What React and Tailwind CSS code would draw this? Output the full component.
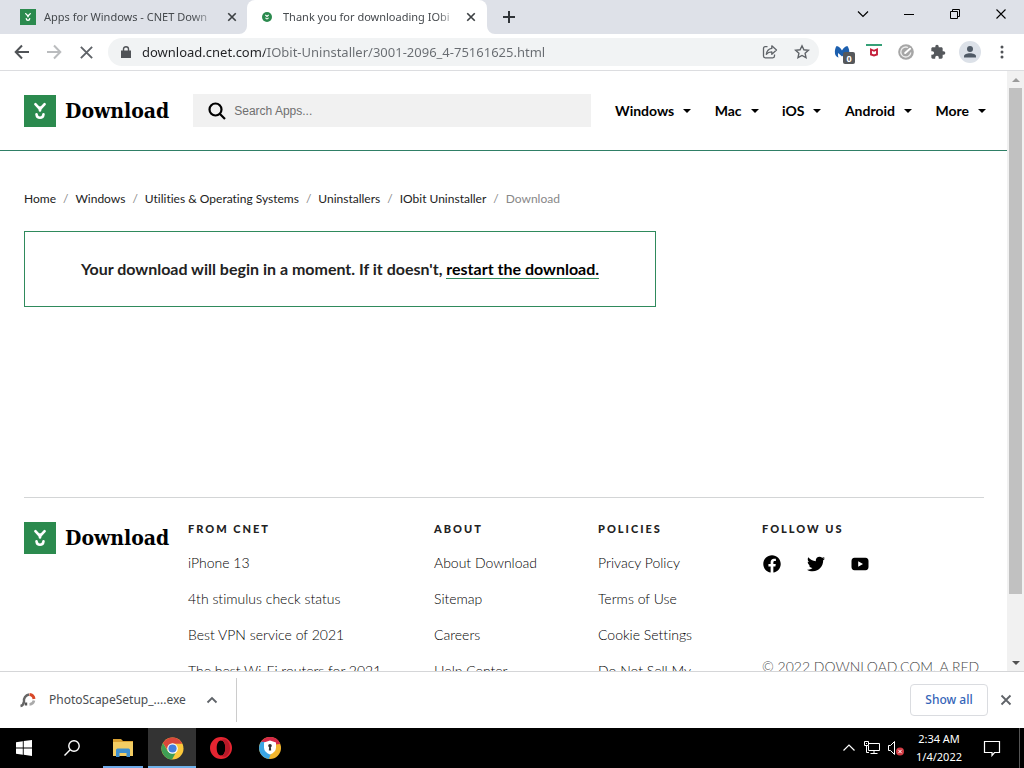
import React from "react";
import { FaFacebook, FaTwitter } from "react-icons/fa";

const ui = "font-['Noto_Sans','Open_Sans',sans-serif]";

function DownloadMark({ className }) {
  return (
    <svg viewBox="0 0 32 32" className={className} aria-hidden="true">
      <rect width="32" height="32" fill="#2b8a4e" />
      <path d="M11.400 9.200l4.600 5 4.600-5" fill="none" stroke="#fff" strokeWidth="2.600" strokeLinecap="round" strokeLinejoin="round" />
      <path d="M16 12.500v3" stroke="#fff" strokeWidth="2.600" strokeLinecap="round" />
      <path d="M12.500 19.300c.6 4.600 6.400 4.600 7 0" fill="none" stroke="#fff" strokeWidth="2.600" strokeLinecap="round" />
    </svg>
  );
}

function Logo() {
  return (
    <a href="#home" className="flex h-8 shrink-0 items-center gap-[9px] text-black">
      <DownloadMark className="size-8 shrink-0" />
      <span className="font-['DejaVu_Serif_Condensed','DejaVu_Serif',serif] text-[21px] leading-8 font-bold font-stretch-condensed">Download</span>
    </a>
  );
}

function Cross({ className, width = 2 }) {
  return (
    <svg viewBox="0 0 12 12" className={className} fill="none" stroke="currentColor" strokeWidth={width} aria-hidden="true">
      <path d="M1.5 1.5l9 9M10.5 1.5l-9 9" />
    </svg>
  );
}

function TabStrip() {
  return (
    <div className="flex h-[34px] shrink-0 bg-[#dee1e8] text-[11px] text-[#45494d]">
      <div className="flex w-[247px] items-center pl-5">
        <DownloadMark className="size-4 shrink-0" />
        <span className="ml-2 w-[174px] overflow-hidden whitespace-nowrap [mask-image:linear-gradient(90deg,#000_85%,transparent)]">
          Apps for Windows - CNET Down
        </span>
        <button aria-label="Close tab" className="ml-[6px] grid size-4 place-items-center text-[#3c4043]">
          <Cross className="size-[10px]" />
        </button>
      </div>
      <div className="relative flex w-[240px] items-center rounded-t-lg bg-white pl-[15px]">
        <svg viewBox="0 0 8 8" className="absolute bottom-0 -left-2 size-2" aria-hidden="true">
          <path d="M8 0v8H0a8 8 0 0 0 8-8z" fill="#fff" />
        </svg>
        <svg viewBox="0 0 8 8" className="absolute -right-2 bottom-0 size-2" aria-hidden="true">
          <path d="M0 0v8h8a8 8 0 0 1-8-8z" fill="#fff" />
        </svg>
        <svg viewBox="0 0 10 10" className="size-[10px] shrink-0" aria-hidden="true">
          <circle cx="5" cy="5" r="5" fill="#2b8a4e" />
          <path d="M3.300 2.800L5 4.500l1.700-1.700M3.500 5.800q1.500 2.200 3 0" fill="none" stroke="#fff" strokeWidth="1.100" />
        </svg>
        <span className="ml-[11px] w-[175px] overflow-hidden whitespace-nowrap [mask-image:linear-gradient(90deg,#000_88%,transparent)]">
          Thank you for downloading IObi
        </span>
        <button aria-label="Close tab" className="ml-[5px] grid size-4 place-items-center text-[#3c4043]">
          <Cross className="size-[10px]" />
        </button>
      </div>
      <button aria-label="New tab" className="ml-[14px] grid w-4 place-items-center">
        <svg viewBox="0 0 12 12" className="size-3" stroke="#303438" strokeWidth="2" aria-hidden="true">
          <path d="M6 0v12M0 6h12" />
        </svg>
      </button>
      <div className="ml-auto flex h-7 text-black">
        <button aria-label="Search tabs" className="grid w-[46px] place-items-center">
          <svg viewBox="0 0 12 8" className="h-2 w-3" fill="none" stroke="currentColor" strokeWidth="1.200" aria-hidden="true"><path d="M1 1.500l5 5 5-5" /></svg>
        </button>
        <button aria-label="Minimize" className="grid w-[46px] place-items-center">
          <svg viewBox="0 0 10 10" className="size-[10px]" stroke="currentColor" aria-hidden="true"><path d="M0 5.500h10" /></svg>
        </button>
        <button aria-label="Restore" className="grid w-[46px] place-items-center">
          <svg viewBox="0 0 10 10" className="size-[10px]" fill="none" stroke="currentColor" aria-hidden="true"><path d="M.5 2.500h7v7h-7zM2.500 2.500v-2h7v7h-2" /></svg>
        </button>
        <button aria-label="Close" className="grid w-[46px] place-items-center">
          <Cross className="size-3" width={1.1} />
        </button>
      </div>
    </div>
  );
}

function Toolbar() {
  return (
    <div className="flex h-[37px] shrink-0 items-center border-b border-[#dcdde0] bg-white pr-[14px] pl-3 text-[#5f6368]">
      <button aria-label="Back" className="grid w-5 place-items-center text-[#505357]">
        <svg viewBox="0 0 16 16" className="size-4" fill="none" stroke="currentColor" strokeWidth="2" aria-hidden="true"><path d="M15 8H2M8 1.500L1.700 8 8 14.500" /></svg>
      </button>
      <button aria-label="Forward" className="ml-3 grid w-5 place-items-center text-[#babcbe]">
        <svg viewBox="0 0 16 16" className="size-4" fill="none" stroke="currentColor" strokeWidth="2" aria-hidden="true"><path d="M1 8h13M8 1.500L14.300 8 8 14.500" /></svg>
      </button>
      <button aria-label="Stop loading" className="ml-3 grid w-5 place-items-center">
        <Cross className="size-[15px]" width={1.5} />
      </button>
      <div className="ml-3 flex h-7 flex-1 items-center rounded-full bg-[#f1f3f4] pr-[9px] pl-[13px]">
        <svg viewBox="0 0 10 12" className="h-3 w-[10px] shrink-0" aria-hidden="true">
          <path d="M0 4.500h10V12H0z" fill="#505357" />
          <path d="M2.500 5V3a2.500 2.300 0 0 1 5 0v2" fill="none" stroke="#505357" strokeWidth="1.400" />
        </svg>
        <input
          aria-label="Address and search bar"
          defaultValue="download.cnet.com/IObit-Uninstaller/3001-2096_4-75161625.html"
          className="ml-[11px] min-w-0 flex-1 bg-[linear-gradient(90deg,#202124_123px,#686c71_123px)] bg-clip-text text-[13px] leading-5 text-transparent outline-none"
        />
        <button aria-label="Share this page" className="grid w-4 place-items-center">
          <svg viewBox="0 0 16 16" className="size-4" fill="none" stroke="currentColor" strokeWidth="1.300" strokeLinejoin="round" aria-hidden="true">
            <path d="M5.500 2.700H3.200Q1.500 2.700 1.500 4.400v7.700q0 1.700 1.700 1.700h7.600q1.700 0 1.700-1.700v-1.600" />
            <path d="M9.800 1.800L14.500 6l-4.700 4.200V7.800Q6.300 7.700 4.300 10.300 5 5.200 9.800 4.400z" />
          </svg>
        </button>
        <button aria-label="Bookmark this tab" className="ml-4 grid w-4 place-items-center">
          <svg viewBox="0 0 16 16" className="size-4" fill="none" stroke="currentColor" strokeWidth="1.400" aria-hidden="true">
            <path d="M8 1.800l1.900 4 4.500.5-3.300 3 .9 4.400L8 11.500l-4 2.200.9-4.400-3.300-3 4.500-.5z" />
          </svg>
        </button>
      </div>
      <div className="ml-[15px] flex items-center gap-4">
        <button aria-label="Malwarebytes" className="relative grid h-5 w-4 place-items-center">
          <svg viewBox="0 0 16 16" className="size-4" aria-hidden="true">
            <path d="M2.600 2C5 2.500 6.500 4 8 6.500 9.500 4 11 2.500 13.400 2c1.600 2 2.300 5 1.700 8-.5 2-2 3.300-3.500 3.500.8-1.500 1-3 .6-4.500L8 12.500 4.200 9c-.4 1.500-.3 3 .4 4.500C2.500 13 1.300 11.500 1 9.500.6 6.500 1.200 4 2.600 2z" fill="#1c5fae" />
          </svg>
          <span className="absolute top-[10px] left-[9px] grid h-3 w-3 place-items-center rounded-xs bg-[#55585b] text-[9px] leading-none font-bold text-white">0</span>
        </button>
        <button aria-label="McAfee WebAdvisor" className="grid w-4 place-items-center">
          <svg viewBox="0 0 16 16" className="size-4" aria-hidden="true">
            <path d="M0 0h16v2H0z" fill="#35a077" />
            <path d="M5 5.500l3 1.300 3-1.300v5L8 11.500l-3-1z" fill="none" stroke="#c5203c" strokeWidth="1.900" />
          </svg>
        </button>
        <button aria-label="Extension" className="grid w-4 place-items-center">
          <svg viewBox="0 0 16 16" className="size-4" aria-hidden="true">
            <circle cx="8" cy="8" r="7.800" fill="#a6a6a6" />
            <path d="M10 3.500A5 5 0 1 0 12.800 8.500" fill="none" stroke="#eee" strokeWidth="1.300" />
            <path d="M7.200 9L12 4.700" fill="none" stroke="#fff" strokeWidth="2" strokeLinecap="round" />
          </svg>
        </button>
        <button aria-label="Extensions" className="grid w-4 place-items-center">
          <svg viewBox="0 0 24 24" className="size-4" fill="#55585c" aria-hidden="true">
            <path d="M20.500 11H19V7c0-1.100-.9-2-2-2h-4V3.500a2.500 2.500 0 0 0-5 0V5H4c-1.100 0-2 .9-2 2v3.800h1.500a2.700 2.700 0 0 1 0 5.400H2V20c0 1.100.9 2 2 2h3.800v-1.500a2.700 2.700 0 0 1 5.400 0V22H17c1.100 0 2-.9 2-2v-4h1.500a2.500 2.500 0 0 0 0-5z" />
          </svg>
        </button>
        <button aria-label="Profile" className="-mx-[3px] grid size-[22px] place-items-center rounded-full bg-[#dce1e8]">
          <svg viewBox="0 0 14 14" className="size-[14px]" fill="#505a66" aria-hidden="true">
            <circle cx="7" cy="4" r="3" /><path d="M1 12.500v-1.300C1 7.300 13 7.300 13 11.200v1.300z" />
          </svg>
        </button>
        <button aria-label="Customize and control Chrome" className="grid w-4 place-items-center">
          <svg viewBox="0 0 4 14" className="h-[14px] w-1" fill="#505357" aria-hidden="true">
            <circle cx="2" cy="2" r="1.500" /><circle cx="2" cy="7" r="1.500" /><circle cx="2" cy="12" r="1.500" />
          </svg>
        </button>
      </div>
    </div>
  );
}

const menus = ["Windows", "Mac", "iOS", "Android", "More"];
const crumbs = ["Home", "Windows", "Utilities & Operating Systems", "Uninstallers", "IObit Uninstaller"];
const columns = [
  { title: "FROM CNET", span: "col-span-3", links: ["iPhone 13", "4th stimulus check status", "Best VPN service of 2021", "The best Wi-Fi routers for 2021"] },
  { title: "ABOUT", span: "col-span-2", links: ["About Download", "Sitemap", "Careers", "Help Center"] },
  { title: "POLICIES", span: "col-span-2", links: ["Privacy Policy", "Terms of Use", "Cookie Settings", "Do Not Sell My"] },
];

function SiteHeader() {
  return (
    <header className="flex h-20 shrink-0 items-center border-b border-[#2f7f66] pr-[21px] pl-6">
      <Logo />
      <label className="ml-6 flex h-[33px] min-w-0 flex-1 items-center gap-2 bg-[#f1f1f1] pl-[15px]">
        <svg viewBox="0 0 18 18" className="size-[18px] shrink-0" fill="none" stroke="#000" strokeWidth="2.200" aria-hidden="true">
          <circle cx="7.500" cy="7.500" r="6" /><path d="M12 12l5 5" />
        </svg>
        <input type="search" aria-label="Search Apps" placeholder="Search Apps..." className="min-w-0 flex-1 font-['Liberation_Sans',sans-serif] text-[12px] outline-none placeholder:text-[#6f6f6f]" />
      </label>
      <nav className="ml-6 flex w-[371px] shrink-0 justify-between">
        {menus.map((m) => (
          <button key={m} className="flex items-center gap-[9px] text-[14px] leading-5 font-bold text-black">
            {m}
            <svg viewBox="0 0 8 4" className="h-1 w-2" aria-hidden="true"><path d="M0 0h8L4 4z" /></svg>
          </button>
        ))}
      </nav>
    </header>
  );
}

function SiteFooter() {
  return (
    <footer className="mt-[190px] mr-[23px] ml-6 grid grid-cols-12 gap-x-6 border-t border-[#d3d5d6] pt-6">
      <div className="col-span-2"><Logo /></div>
      {columns.map((c) => (
        <div key={c.title} className={c.span}>
          <h2 className="text-[11px] leading-[14px] font-black tracking-[2px] text-[#222]">{c.title}</h2>
          <ul className="mt-[17px] flex flex-col gap-4 text-[14px] leading-5 font-light whitespace-nowrap text-black">
            {c.links.map((l) => <li key={l}><a href="#footer">{l}</a></li>)}
          </ul>
        </div>
      ))}
      <div className="col-span-3">
        <h2 className="text-[11px] leading-[14px] font-black tracking-[2px] text-[#222]">FOLLOW US</h2>
        <div className="mt-[19px] flex gap-[26px] pl-px text-black">
          <a href="#facebook" aria-label="Facebook"><FaFacebook className="size-[18px]" /></a>
          <a href="#twitter" aria-label="Twitter"><FaTwitter className="size-[18px]" /></a>
          <a href="#youtube" aria-label="YouTube">
            <svg viewBox="0 0 18 18" className="size-[18px]" aria-hidden="true">
              <path d="M3.500 2.800h11Q17.500 3 17.500 6v6q0 3-3 3.200h-11Q.5 15 .5 12V6q0-3 3-3.200zM7.200 6.200v5.600L12 9z" fillRule="evenodd" />
            </svg>
          </a>
        </div>
        <p className="mt-[84px] text-[14px] leading-5 font-light whitespace-nowrap text-[#444]">© 2022 DOWNLOAD.COM, A RED</p>
      </div>
    </footer>
  );
}

function Scrollbar() {
  return (
    <div className="flex w-[17px] shrink-0 flex-col bg-[#f1f1f1]">
      <button aria-label="Scroll up" className="grid h-[17px] place-items-center">
        <svg viewBox="0 0 8 4" className="h-1 w-2" fill="#9b9b9b" aria-hidden="true"><path d="M0 4h8L4 0z" /></svg>
      </button>
      <div className="flex-1 px-[2px]"><div className="h-[89.4%] bg-[#c1c1c1]" /></div>
      <button aria-label="Scroll down" className="grid h-[17px] place-items-center">
        <svg viewBox="0 0 8 4" className="h-1 w-2" fill="#505050" aria-hidden="true"><path d="M0 0h8L4 4z" /></svg>
      </button>
    </div>
  );
}

function DownloadShelf() {
  return (
    <div className="flex h-[57px] shrink-0 items-center border-t border-[#d5d6d8] bg-white pr-[11px] pl-5">
      <button className="flex items-center text-[12px] text-[#4a4d51]">
        <svg viewBox="0 0 16 16" className="size-4" fill="none" aria-hidden="true">
          <path d="M.5 14q3-.5 3.500-4.500A6 6 0 0 1 9 2.500" stroke="#666" strokeWidth="2.400" />
          <path d="M9.500 2.500A5 5 0 0 1 14 7" stroke="#d84828" strokeWidth="3" />
          <path d="M14 8.500A5 5 0 0 1 9.500 12.500" stroke="#aaa" strokeWidth="2.600" />
          <path d="M6 10.500v3" stroke="#555" strokeWidth="2.400" />
        </svg>
        <span className="ml-[13px]">PhotoScapeSetup_....exe</span>
      </button>
      <button aria-label="Download options" className="ml-[18px] grid h-8 w-4 place-items-center text-[#5f6368]">
        <svg viewBox="0 0 12 8" className="h-2 w-3" fill="none" stroke="currentColor" strokeWidth="1.800" aria-hidden="true"><path d="M1.500 6.500L6 2l4.500 4.500" /></svg>
      </button>
      <div className="ml-4 h-11 w-px bg-[#ccc]" />
      <button className="ml-auto h-8 w-[78px] rounded border border-[#dadce0] text-[12px] font-medium text-[#3565b8]">Show all</button>
      <button aria-label="Close downloads bar" className="ml-[11px] grid size-[14px] place-items-center text-[#5f6368]"><Cross className="size-3" width={1.8} /></button>
    </div>
  );
}

function Taskbar() {
  return (
    <div className="flex h-10 shrink-0 bg-black text-white">
      <button aria-label="Start" className="grid w-12 place-items-center">
        <svg viewBox="0 0 16 16" className="size-4" fill="#fff" aria-hidden="true"><path d="M0 2.200L6.800 1.200v6.300H0zM7.700 1.100L16 0v7.500H7.700zM0 8.400h6.800v6.300L0 13.800zM7.700 8.400H16V16l-8.300-1.200z" /></svg>
      </button>
      <button aria-label="Search" className="grid w-12 place-items-center">
        <svg viewBox="0 0 16 16" className="size-4" fill="none" stroke="#fff" strokeWidth="1.400" aria-hidden="true"><circle cx="10" cy="6" r="5.200" /><path d="M6.200 9.800L.5 15.500" /></svg>
      </button>
      <button aria-label="File Explorer" className="ml-[7px] grid w-10 place-items-center border-b-2 border-[#6faae8] pt-[2px]">
        <svg viewBox="0 0 22 20" className="h-5 w-[22px]" aria-hidden="true">
          <path d="M1 1h8l2 2h10v3H1z" fill="#d9a133" /><path d="M1 4h20v14H1z" fill="#f3cd63" />
          <path d="M4 19v-7q0-1.500 1.500-1.500h11Q18 10.500 18 12v7h-3.500v-4h-7v4z" fill="#3e8fce" />
        </svg>
      </button>
      <button aria-label="Google Chrome" className="ml-[5px] grid w-12 place-items-center border-b-2 border-[#6fb2ea] bg-[#333] pt-[2px]">
        <svg viewBox="0 0 24 24" className="size-[23px]" aria-hidden="true">
          <circle cx="12" cy="12" r="11.500" fill="#fbc83b" />
          <path d="M2 6.300A11.500 11.500 0 0 1 22 6.300L21.500 7H12L7.500 14.500z" fill="#d9473b" />
          <path d="M2 6.300l5.500 9 7.500 2-3.500 6.200A11.500 11.500 0 0 1 2 6.300z" fill="#3f9e55" />
          <circle cx="12" cy="12" r="5.500" fill="#fff" /><circle cx="12" cy="12" r="4.300" fill="#447fdc" />
        </svg>
      </button>
      <button aria-label="Opera" className="grid w-[50px] place-items-center">
        <svg viewBox="0 0 22 22" className="size-[22px]" aria-hidden="true">
          <path d="M11 0a11 11 0 1 0 0 22 11 11 0 0 0 0-22zm0 3.500c2.700 0 4.300 3.300 4.300 7.500s-1.600 7.500-4.300 7.500S6.700 15.200 6.700 11 8.300 3.500 11 3.500z" fill="#e52531" fillRule="evenodd" />
          <path d="M11 3.500Q13.500 1.500 16 2.500q4 3 4 8.500t-4 8.500q-2.500 1-5-1 4.300 0 4.300-7.500T11 3.500z" fill="#b71928" />
        </svg>
      </button>
      <button aria-label="Secure browser" className="grid w-12 place-items-center">
        <svg viewBox="0 0 22 22" className="size-[22px]" aria-hidden="true">
          <circle cx="11" cy="11" r="11" fill="#f2b52d" />
          <path d="M2 4.800A11 11 0 0 1 21.300 7L11 8z" fill="#d62848" />
          <path d="M2 4.800A11 11 0 0 0 10 22l2-6L7 5z" fill="#3ba5e4" />
          <path d="M11 3.500l6 2v5q0 4.500-6 7-6-2.500-6-7v-5z" fill="#fff" />
          <circle cx="11" cy="8.700" r="1.800" fill="#333" /><path d="M10.300 9h1.400l.5 4.500H9.800z" fill="#333" />
        </svg>
      </button>
      <div className="ml-auto flex items-center">
        <button aria-label="Show hidden icons" className="grid w-[14px] place-items-center">
          <svg viewBox="0 0 12 8" className="h-2 w-3" fill="none" stroke="#fff" strokeWidth="1.200" aria-hidden="true"><path d="M.5 6.500L6 1l5.500 5.500" /></svg>
        </button>
        <button aria-label="Network" className="ml-2 grid w-4 place-items-center">
          <svg viewBox="0 0 16 16" className="size-4" fill="none" stroke="#fff" aria-hidden="true"><path d="M4.500 3.500h11v7h-11V6M10 10.500v3M6.500 13.500h7M.5 1.500h4v4h-4zM2.500 5.500v7H5M2.500 3v1" /></svg>
        </button>
        <button aria-label="Volume muted" className="ml-2 grid w-4 place-items-center">
          <svg viewBox="0 0 16 16" className="size-4" fill="none" stroke="#fff" aria-hidden="true">
            <path d="M.5 5.500h2l4-4v13l-4-4h-2z" /><circle cx="12" cy="11.500" r="4" fill="#d23a42" stroke="none" /><path d="M10.300 9.800l3.400 3.400M13.700 9.800l-3.400 3.400" />
          </svg>
        </button>
        <div className="ml-[6px] w-[58px] text-center text-[11px] leading-[18px]"><div>2:34 AM</div><div>1/4/2022</div></div>
        <button aria-label="Notifications" className="ml-[9px] grid w-[30px] place-items-center">
          <svg viewBox="0 0 18 18" className="size-[18px]" fill="none" stroke="#fff" strokeWidth="1.200" aria-hidden="true"><path d="M1.500 2.500h15v11h-5L9 16.500v-3H1.500z" /></svg>
        </button>
        <div className="ml-3 h-10 w-px bg-[#555]" />
        <div className="w-1" />
      </div>
    </div>
  );
}

export default function App() {
  return (
    <div className={`flex h-screen flex-col overflow-hidden bg-white ${ui}`}>
      <TabStrip />
      <Toolbar />
      <div className="flex min-h-0 flex-1">
        <main className="min-w-0 flex-1 overflow-hidden font-['Lato',sans-serif] text-[#222] [font-variant-ligatures:none]">
          <SiteHeader />
          <nav aria-label="Breadcrumb" className="mt-10 ml-6">
            <ol className="flex gap-[7px] text-[12px] leading-4 text-[#222]">
              {crumbs.map((c) => (
                <li key={c} className="flex gap-[7px]"><a href="#crumb">{c}</a><span className="text-[#888]">/</span></li>
              ))}
              <li className="text-[#888]">Download</li>
            </ol>
          </nav>
          <section className="mt-6 ml-6 flex h-[76px] max-w-[632px] items-center justify-center border border-[#2f8a5c] text-[16px] font-bold">
            <p className="leading-[20px]">
              Your download will begin in a moment. If it doesn't,{" "}
              <a href="#restart" className="border-b border-[#2f8a5c] text-black">restart the download.</a>
            </p>
          </section>
          <SiteFooter />
        </main>
        <Scrollbar />
      </div>
      <DownloadShelf />
      <Taskbar />
    </div>
  );
}
